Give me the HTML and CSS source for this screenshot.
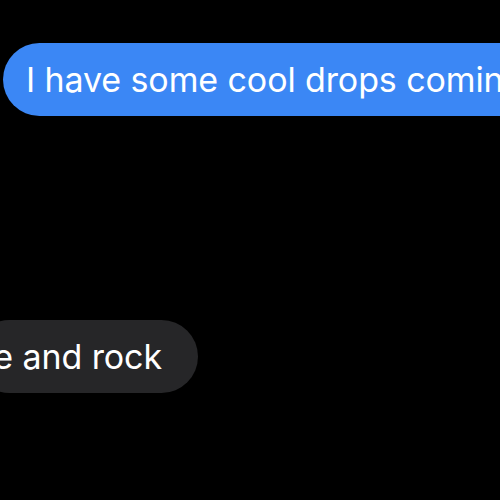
FILE: index.html
```html
<!DOCTYPE html>
<html>
<head>
<meta charset="utf-8">
<link rel="stylesheet" href="styles.css">
</head>
<body>
<div class="thread">
  <div class="row sent">
    <div class="bubble blue">I have some cool drops coming</div>
  </div>
  <div class="row received">
    <div class="bubble gray">e and rock</div>
  </div>
</div>
</body>
</html>
```
FILE: styles.css
```css
html, body {
  margin: 0;
  padding: 0;
  background: #000;
  width: 500px;
  height: 500px;
  overflow: hidden;
}
.thread {
  display: flex;
  flex-direction: column;
  gap: 204px;
  padding-top: 43px;
  font-family: Inter, "Noto Sans", sans-serif;
}
.row {
  display: flex;
}
.sent {
  padding-left: 3px;
}
.received {
  width: 198px;
  justify-content: flex-end;
}
.bubble {
  flex-shrink: 0;
  height: 73px;
  display: flex;
  align-items: center;
  white-space: nowrap;
  color: #fff;
  font-size: 34px;
  letter-spacing: -0.1px;
  border-radius: 37px;
}
.blue {
  background: #3b87f5;
  padding: 0 26px 0 23px;
}
.gray {
  background: #262628;
  padding: 0 36px 0 20px;
}
```
